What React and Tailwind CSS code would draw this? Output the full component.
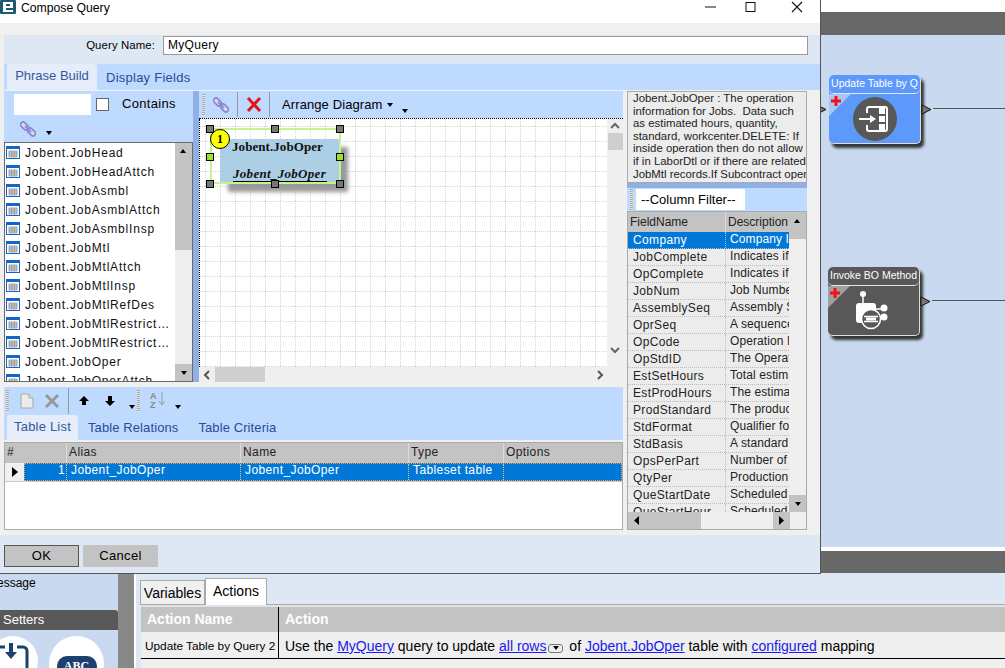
const ui = { fontFamily: '"Liberation Sans", Arial, sans-serif' };

const tables = [
  "Jobent.JobHead",
  "Jobent.JobHeadAttch",
  "Jobent.JobAsmbl",
  "Jobent.JobAsmblAttch",
  "Jobent.JobAsmblInsp",
  "Jobent.JobMtl",
  "Jobent.JobMtlAttch",
  "Jobent.JobMtlInsp",
  "Jobent.JobMtlRefDes",
  "Jobent.JobMtlRestrict…",
  "Jobent.JobMtlRestrict…",
  "Jobent.JobOper",
  "Jobent.JobOperAttch",
];

const fields = [
  ["Company", "Company Ident"],
  ["JobComplete", "Indicates if the"],
  ["OpComplete", "Indicates if the"],
  ["JobNum", "Job Number"],
  ["AssemblySeq", "Assembly Seq"],
  ["OprSeq", "A sequence"],
  ["OpCode", "Operation Master"],
  ["OpStdID", "The Operation"],
  ["EstSetHours", "Total estimated"],
  ["EstProdHours", "The estimated"],
  ["ProdStandard", "The production"],
  ["StdFormat", "Qualifier for"],
  ["StdBasis", "A standard basis"],
  ["OpsPerPart", "Number of ops"],
  ["QtyPer", "Production Qty"],
  ["QueStartDate", "Scheduled date"],
  ["QueStartHour", "Scheduled date"],
];

const description = [
  "Jobent.JobOper : The operation",
  "information for Jobs.  Data such",
  "as estimated hours, quantity,",
  "standard, workcenter.DELETE: If",
  "inside operation then do not allow",
  "if in LaborDtl or if there are related",
  "JobMtl records.If Subcontract oper",
];

function TableIcon() {
  return (
    <svg width="14" height="13" viewBox="0 0 14 13" className="shrink-0">
      <rect x="0.5" y="0.5" width="13" height="12" fill="#fff" stroke="#1166c8" />
      <rect x="1" y="1" width="12" height="2" fill="#1166c8" />
      <path d="M3 5h8v6H3zM3 7h8M3 9h8M5.7 5v6M8.3 5v6" fill="#e4e4e4" stroke="#8a8a8a" strokeWidth="0.8" />
    </svg>
  );
}

function ChainIcon() {
  return (
    <svg width="16" height="16" viewBox="0 0 16 16">
      <g fill="#d3def4" stroke="#8f84ca" strokeWidth="1.6">
        <rect x="0" y="2.5" width="9" height="5" rx="2.5" transform="rotate(45 4.5 5)" />
        <rect x="7" y="8.5" width="9" height="5" rx="2.5" transform="rotate(45 11.5 11)" />
      </g>
      <path d="M5 5l6 6" stroke="#7f90d4" strokeWidth="2" />
    </svg>
  );
}

function Caret() {
  return <span className="w-0 h-0 border-x-[3.5px] border-x-transparent border-t-[4px] border-t-black" />;
}

function Grip() {
  return <div className="w-[3px] h-[22px] shrink-0 bg-[repeating-linear-gradient(#a8a8a8_0_1px,#e4e4e4_1px_2px)]" />;
}

function Handle({ className }) {
  return <div className={`absolute w-[8px] h-[8px] border border-black ${className}`} />;
}

function GridDots() {
  return (
    <svg className="absolute inset-0 w-full h-full">
      <defs>
        <pattern id="dots" x="5" y="7" width="15" height="15" patternUnits="userSpaceOnUse">
          <path d="M0 0.5H15M0.5 0V15" stroke="#d4d4d4" strokeDasharray="1 1" fill="none" />
        </pattern>
      </defs>
      <rect width="100%" height="100%" fill="url(#dots)" />
    </svg>
  );
}

function QueryNodeIcon() {
  return (
    <svg width="44" height="44" viewBox="0 0 44 44">
      <circle cx="22" cy="22" r="22" fill="#585858" />
      <path d="M14 16v-4a2 2 0 0 1 2-2h16a2 2 0 0 1 2 2v20a2 2 0 0 1-2 2H16a2 2 0 0 1-2-2v-4" fill="none" stroke="#fff" strokeWidth="2" />
      <path d="M26 11h6v6h-6zM26 19h6v6h-6zM26 27h6v6h-6z" fill="#fff" />
      <path d="M6 21h11v-3l6 4-6 4v-3H6z" fill="#fff" />
    </svg>
  );
}

function MethodNodeIcon() {
  return (
    <svg width="36" height="42" viewBox="0 0 36 42">
      <circle cx="7" cy="4" r="3" fill="#fff" />
      <path d="M7 6v8" stroke="#fff" strokeWidth="1.5" />
      <rect x="0" y="13" width="20" height="20" rx="3" fill="#fff" />
      <path d="M20 19h7M20 27h7" stroke="#fff" strokeWidth="1.5" />
      <circle cx="28" cy="18" r="3.5" fill="#fff" />
      <circle cx="28" cy="27" r="3.5" fill="#fff" />
      <circle cx="15" cy="29" r="9.5" fill="#585858" stroke="#fff" strokeWidth="1.5" />
      <path d="M8 26.5h14M8 31.5h14" stroke="#fff" strokeWidth="1.5" />
      <rect x="10" y="27.5" width="10" height="3" fill="#fff" />
    </svg>
  );
}

function Plus() {
  return (
    <svg width="10" height="10" viewBox="0 0 10 10" className="absolute left-[2px] top-[2px]">
      <path d="M3.5 0h3v3.5H10v3H6.5V10h-3V6.5H0v-3h3.5z" fill="#f01020" />
    </svg>
  );
}

function Port({ className }) {
  return (
    <svg width="11" height="11" viewBox="0 0 11 11" className={`absolute ${className}`}>
      <path d="M1 1l9 4.5L1 10z" fill="#777" stroke="#111" />
    </svg>
  );
}

function FlowNode({ title, left, top, bg, corner, icon }) {
  return (
    <div
      className={`absolute w-[92px] h-[69px] rounded-[5px] flex flex-col shadow-[3px_4px_3px_#333] border-r border-b border-[#ddd] ${left} ${top} ${bg}`}
    >
      <div className="h-[19px] shrink-0 rounded-[5px] border-b border-[#dfe8f5] flex items-center justify-center text-white text-[10.5px] whitespace-nowrap">
        {title}
      </div>
      <div className="relative flex-1 flex items-center justify-center">
        <svg width="22" height="22" viewBox="0 0 22 22" className="absolute left-0 top-0">
          <path d="M0 0h22L0 22z" fill={corner} />
        </svg>
        <Plus />
        {icon}
      </div>
    </div>
  );
}

export default function App() {
  return (
    <div className="relative w-[1005px] h-[668px] overflow-hidden bg-[#dee8f5] flex flex-col text-black" style={ui}>
      {/* Window behind */}
      <div className="h-[12px] bg-white shrink-0" />
      <div className="h-[23px] bg-[#686868] shrink-0" />
      <div className="relative h-[512px] bg-[#c9d9ef] shrink-0">
        <FlowNode
          title="Update Table by Q"
          left="left-[829px]"
          top="top-[40px]"
          bg="bg-[#5c99fb]"
          corner="#a9c6f0"
          icon={<QueryNodeIcon />}
        />
        <FlowNode
          title="Invoke BO Method"
          left="left-[828px]"
          top="top-[232px]"
          bg="bg-[#585858]"
          corner="#a0a0a0"
          icon={<MethodNodeIcon />}
        />
        <Port className="left-[816px] top-[69px]" />
        <Port className="left-[921px] top-[69px]" />
        <Port className="left-[920px] top-[261px]" />
        <div className="absolute left-[933px] right-0 top-[73px] h-[1px] bg-[#555]" />
        <div className="absolute left-[932px] right-0 top-[265px] h-[1px] bg-[#555]" />
      </div>
      <div className="h-[4px] bg-white shrink-0" />
      <div className="h-[22px] bg-[#686868] shrink-0" />
      <div className="flex flex-1 min-h-0">
        <div className="w-[118px] shrink-0 bg-[#c9d9ef] flex flex-col overflow-hidden">
          <div className="h-[37px] shrink-0 text-[12px] leading-[14px] whitespace-nowrap">
            <div className="h-[3px] overflow-hidden">
              <div className="-ml-[4px] -mt-[11px]">Show</div>
            </div>
            <div className="-ml-[3px]">essage</div>
          </div>
          <div className="h-[20px] bg-[#585858] rounded-tr-[3px] text-white text-[13px] pl-[3px] leading-[20px] shrink-0">
            Setters
          </div>
          <div className="flex gap-[11px] -ml-[12px] mt-[6px] shrink-0">
            <div className="w-[50px] h-[50px] rounded-full bg-white shrink-0 flex items-start justify-center pt-[7px]">
              <svg width="34" height="32" viewBox="0 0 34 32">
                <path d="M3 4h6M21 4h6a4 4 0 0 1 4 4v24" fill="none" stroke="#1c4170" strokeWidth="3" />
                <path d="M13 0h4v9h4l-6 7-6-7h4z" fill="#1c4170" />
              </svg>
            </div>
            <div className="w-[55px] h-[55px] rounded-full bg-white shrink-0 flex items-start justify-center pt-[20px]">
              <div className="w-[40px] h-[20px] rounded-full bg-[#1c4170] text-white text-[12px] font-bold text-center leading-[20px]" style={{ fontFamily: '"Liberation Serif", serif' }}>
                ABC
              </div>
            </div>
          </div>
        </div>
        <div className="w-[16px] shrink-0 bg-[#888]" />
        <div className="w-[2px] shrink-0 bg-white" />
        <div className="flex-1 min-w-0 flex flex-col pl-[4px]">
          <div className="flex items-end h-[32px] shrink-0 border-b border-[#aaa]">
            <div className="h-[24px] w-[65px] bg-[#f0f0f0] border border-[#aaa] border-b-0 text-[14px] text-center leading-[24px]">
              Variables
            </div>
            <div className="h-[27px] w-[62px] bg-white border border-[#aaa] border-b-0 text-[14px] text-center leading-[24px] -mb-px">
              Actions
            </div>
          </div>
          <div className="flex-1 bg-[#efefef] ml-[1px]">
            <div className="flex h-[27px] bg-[#c3c3c3] text-white text-[14px] font-bold leading-[25px] border-t-2 border-[#dfe3e8]">
              <div className="w-[138px] pl-[6px] border-r border-black">Action Name</div>
              <div className="pl-[6px]">Action</div>
            </div>
            <div className="flex h-[27px] border-b border-black items-center">
              <div className="w-[138px] h-full pl-[4px] border-r border-black text-[11.8px] leading-[29px] whitespace-nowrap">
                Update Table by Query 2
              </div>
              <div className="pl-[6px] pt-[3px] text-[14px] whitespace-nowrap flex items-center">
                <span className="whitespace-pre">Use the </span>
                <a className="text-[#1a1aee] underline">MyQuery</a>
                <span className="whitespace-pre"> query to update </span>
                <a className="text-[#1a1aee] underline">all rows</a>
                <span className="mx-[2px] w-[15px] h-[9px] mt-[3px] rounded-[3px] border border-[#777] bg-[#eee] flex items-center justify-center">
                  <Caret />
                </span>
                <span className="whitespace-pre"> of </span>
                <a className="text-[#1a1aee] underline">Jobent.JobOper</a>
                <span className="whitespace-pre"> table with </span>
                <a className="text-[#1a1aee] underline">configured</a>
                <span className="whitespace-pre"> mapping</span>
              </div>
            </div>
          </div>
        </div>
      </div>

      {/* Compose Query dialog */}
      <div className="absolute left-0 top-0 w-[821px] h-[574px] bg-[#f0f0f0] border-r border-b border-[#555] flex flex-col">
        <div className="h-[23px] shrink-0 bg-white flex items-center relative">
          <svg width="16" height="14" viewBox="0 0 16 14" className="shrink-0 -mt-[9px]">
            <rect width="16" height="14" rx="1" fill="#1c5a70" />
            <path d="M3 2h10v6H6v2h7v2H3z" fill="#fff" />
            <path d="M6 4h4v2H6z" fill="#1c5a70" />
          </svg>
          <span className="ml-[5px] -mt-[7px] text-[12.2px]">Compose Query</span>
          <div className="ml-auto flex items-center -mt-[9px]">
            <svg width="120" height="12" viewBox="0 0 120 12" className="-mr-[5px]">
              <path d="M0 6h11" stroke="#111" />
              <rect x="41" y="1.5" width="9" height="9" fill="none" stroke="#111" />
              <path d="M87 1l10 10M97 1L87 11" stroke="#111" strokeWidth="1.1" />
            </svg>
          </div>
        </div>
        <div className="h-[12px] shrink-0" />

        <div className="h-[29px] shrink-0 ml-[4px] bg-[#dee8f5] flex items-start pt-[1px] pr-[12px]">
          <span className="w-[151px] text-right text-[11.4px] tracking-[0.1px] leading-[18px]">Query Name:</span>
          <div className="ml-[8px] flex-1 h-[19px] bg-white border border-[#999] pl-[4px] text-[12px] tracking-[0.3px] leading-[17px]">
            MyQuery
          </div>
        </div>

        <div className="h-[26px] shrink-0 ml-[4px] bg-[#bedaff] flex items-end pl-[3px]">
          <div className="h-[26px] w-[90px] bg-[#e4edf9] rounded-t-[3px] text-center text-[13px] text-[#34589c] leading-[24px]">
            Phrase Build
          </div>
          <div className="h-[24px] pl-[9px] text-[13px] tracking-[0.25px] text-[#2a4a9a] leading-[24px]">Display Fields</div>
        </div>

        <div className="flex flex-1 min-h-0 ml-[4px] pt-[1px]">
          <div className="w-[619px] shrink-0 flex flex-col">
            <div className="h-[291px] flex shrink-0">
              {/* Table picker */}
              <div className="w-[189px] shrink-0 flex flex-col bg-[#bedaff]">
                <div className="h-[24px] flex items-center pl-[10px] pt-[2px] shrink-0">
                  <div className="w-[77px] h-[21px] bg-white" />
                  <div className="ml-[5px] w-[13px] h-[13px] bg-white border border-[#666]" />
                  <span className="ml-[13px] text-[13px] tracking-[0.3px]">Contains</span>
                </div>
                <div className="h-[27px] flex items-start pl-[16px] pt-[6px] shrink-0">
                  <ChainIcon />
                  <span className="ml-[10px] mt-[10px] flex">
                    <Caret />
                  </span>
                </div>
                <div className="flex-1 min-h-0 flex bg-white border-[1.5px] border-[#6a6a6a]">
                  <div className="flex-1 min-w-0 overflow-hidden">
                    {tables.map((t, i) => (
                      <div key={i} className="h-[19px] flex items-center pl-[1px] whitespace-nowrap">
                        <TableIcon />
                        <span className="ml-[5px] text-[12px] tracking-[0.8px] text-[#111]">{t}</span>
                      </div>
                    ))}
                  </div>
                  <div className="w-[17px] shrink-0 bg-[#efefef] flex flex-col">
                    <div className="h-[17px] bg-[#c3c3c3] flex items-center justify-center rotate-180">
                      <Caret />
                    </div>
                    <div className="h-[90px] bg-[#c3c3c3]" />
                    <div className="flex-1" />
                    <div className="h-[17px] bg-[#c3c3c3] flex items-center justify-center">
                      <Caret />
                    </div>
                  </div>
                </div>
              </div>
              <div className="w-[6px] shrink-0 bg-[#8fb0e4]" />
              {/* Diagram */}
              <div className="flex-1 min-w-0 flex flex-col">
                <div className="h-[27px] shrink-0 bg-[#bedaff] flex items-center">
                  <div className="ml-[3px]">
                    <Grip />
                  </div>
                  <div className="w-[32px] flex justify-center">
                    <ChainIcon />
                  </div>
                  <div className="w-px h-[25px] bg-[#999]" />
                  <div className="w-[31px] flex justify-center">
                    <svg width="16" height="15" viewBox="0 0 16 15">
                      <path d="M2 1l12 13M14 1L2 14" stroke="#e01818" strokeWidth="3" />
                    </svg>
                  </div>
                  <div className="w-px h-[25px] bg-[#999]" />
                  <span className="ml-[12px] text-[13px] tracking-[0.1px]">Arrange Diagram</span>
                  <span className="ml-[4px] flex">
                    <Caret />
                  </span>
                  <span className="ml-[9px] mt-[13px] flex">
                    <Caret />
                  </span>
                </div>
                <div className="flex-1 min-h-0 flex border-t border-dotted border-black">
                  <div className="relative flex-1 bg-white border-l border-dotted border-black overflow-hidden">
                    <GridDots />
                    {/* Table node on the diagram */}
                    <div className="absolute left-[20px] top-[20px] w-[120px] h-[45px] bg-[#adcfe5] shadow-[8px_8px_4px_#999]">
                      <div className="pl-[12px] text-[13px] font-bold leading-[15px] text-[#111] tracking-[0.07px]" style={{ fontFamily: '"Liberation Serif", serif' }}>
                        Jobent.JobOper
                      </div>
                      <div className="ml-[13px] mt-[13px] w-[94px] border-b border-black text-[13px] italic font-bold leading-[14px] text-[#111] tracking-[0.3px] whitespace-nowrap" style={{ fontFamily: '"Liberation Serif", serif' }}>
                        Jobent_JobOper
                      </div>
                    </div>
                    <div className="absolute left-[10px] top-[9px] w-[131px] h-[56px] border-2 border-[#c4f58c]" />
                    <div className="absolute left-[10px] top-[10px] w-[20px] h-[20px] rounded-full bg-[#ffff00] border border-black text-center text-[12px] font-bold leading-[18px]" style={{ fontFamily: '"Liberation Serif", serif' }}>
                      1
                    </div>
                    <Handle className="left-[6px] top-[6px] bg-[#777]" />
                    <Handle className="left-[71px] top-[6px] bg-[#777]" />
                    <Handle className="left-[136px] top-[6px] bg-[#777]" />
                    <Handle className="left-[6px] top-[34px] bg-[#9be22d]" />
                    <Handle className="left-[136px] top-[34px] bg-[#9be22d]" />
                    <Handle className="left-[6px] top-[61px] bg-[#777]" />
                    <Handle className="left-[71px] top-[61px] bg-[#777]" />
                    <Handle className="left-[136px] top-[61px] bg-[#777]" />
                  </div>
                  <div className="w-[16px] shrink-0 bg-[#efefef] flex flex-col items-center pt-[2px]">
                    <svg width="12" height="10" viewBox="0 0 12 10">
                      <path d="M2 7l4-4 4 4" fill="none" stroke="#666" strokeWidth="2" />
                    </svg>
                    <div className="w-[15px] h-[17px] bg-[#cfcfcf] mt-[2px]" />
                    <div className="flex-1" />
                    <svg width="12" height="10" viewBox="0 0 12 10" className="mb-[12px]">
                      <path d="M2 3l4 4 4-4" fill="none" stroke="#666" strokeWidth="2" />
                    </svg>
                  </div>
                </div>
                <div className="h-[15px] shrink-0 bg-[#efefef] flex items-center">
                  <svg width="10" height="12" viewBox="0 0 10 12" className="ml-[3px]">
                    <path d="M7 2L3 6l4 4" fill="none" stroke="#555" strokeWidth="2" />
                  </svg>
                  <div className="ml-[3px] w-[50px] h-[15px] bg-[#cfcfcf]" />
                  <div className="flex-1" />
                  <svg width="10" height="12" viewBox="0 0 10 12" className="mr-[18px]">
                    <path d="M3 2l4 4-4 4" fill="none" stroke="#555" strokeWidth="2" />
                  </svg>
                </div>
              </div>
            </div>

            <div className="h-[5px] shrink-0" />

            {/* Bottom panel */}
            <div className="flex-1 min-h-0 flex flex-col">
              <div className="h-[53px] shrink-0 bg-[#bedaff] flex flex-col">
                <div className="h-[27px] flex items-center pl-[2px] shrink-0">
                  <Grip />
                  <div className="w-[37px] flex justify-center -ml-[1px]">
                    <svg width="14" height="16" viewBox="0 0 14 16">
                      <path d="M1 1h8l4 4v10H1z" fill="#ececec" stroke="#a8a8a8" />
                      <path d="M9 1v4h4" fill="#ddd" stroke="#a8a8a8" />
                    </svg>
                  </div>
                  <svg width="16" height="16" viewBox="0 0 16 16" className="-ml-[1px]">
                    <path d="M2 2l12 12M14 2L2 14" stroke="#999" strokeWidth="3" />
                  </svg>
                  <div className="ml-[8px] w-px h-[26px] bg-[#999]" />
                  <svg width="10" height="10" viewBox="0 0 10 10" className="ml-[10px]">
                    <path d="M5 0l5 5H7v4H3V5H0z" fill="#000" />
                  </svg>
                  <svg width="10" height="10" viewBox="0 0 10 10" className="ml-[16px]">
                    <path d="M3 0h4v5h3l-5 5-5-5h3z" fill="#000" />
                  </svg>
                  <span className="ml-[14px] mt-[13px] flex">
                    <Caret />
                  </span>
                  <div className="ml-[2px]">
                    <Grip />
                  </div>
                  <div className="ml-[10px] w-[17px] relative h-[18px] text-[9px] font-bold leading-[9px] text-[#888]">
                    A
                    <br />Z
                    <svg width="6" height="14" viewBox="0 0 6 14" className="absolute left-[9px] top-0">
                      <path d="M3 0v12M0 9l3 4 3-4" fill="none" stroke="#999" />
                    </svg>
                  </div>
                  <span className="ml-[8px] mt-[13px] flex">
                    <Caret />
                  </span>
                </div>
                <div className="h-[26px] flex items-end pl-[3px]">
                  <div className="h-[25px] w-[71px] bg-[#e4edf9] rounded-t-[3px] text-center text-[13px] tracking-[0.2px] text-[#34589c] leading-[23px]">
                    Table List
                  </div>
                  <div className="h-[24px] pl-[10px] text-[13px] tracking-[0.1px] text-[#2a4a9a] leading-[24px]">Table Relations</div>
                  <div className="h-[24px] pl-[20px] text-[13px] tracking-[0.1px] text-[#2a4a9a] leading-[24px]">Table Criteria</div>
                </div>
              </div>
              <div className="h-[2px] shrink-0" />
              <div className="flex-1 min-h-0 bg-white border border-[#aaa] flex flex-col text-[12px] tracking-[0.4px]">
                <div className="h-[20px] shrink-0 bg-[#c3c3c3] flex leading-[19px] text-[#222]">
                  <div className="w-[62px] pl-[2px] border-r border-[#ddd]">#</div>
                  <div className="w-[174px] pl-[2px] border-r border-[#ddd]">Alias</div>
                  <div className="w-[168px] pl-[2px] border-r border-[#ddd]">Name</div>
                  <div className="w-[95px] pl-[2px] border-r border-[#ddd]">Type</div>
                  <div className="pl-[2px]">Options</div>
                </div>
                <div className="h-[19px] shrink-0 flex leading-[12px] border-b border-[#ccc]">
                  <div className="w-[19px] shrink-0 bg-[#f0f0f0] flex items-center justify-center">
                    <svg width="6" height="10" viewBox="0 0 6 10">
                      <path d="M0 0l6 5-6 5z" fill="#000" />
                    </svg>
                  </div>
                  <div className="flex-1 flex bg-[#0078d7] text-white border border-dotted border-[#f0a040]">
                    <div className="w-[42px] pr-[1px] text-right border-r border-dotted border-[#f0c080]">1</div>
                    <div className="w-[174px] pl-[4px] border-r border-dotted border-[#f0c080]">Jobent_JobOper</div>
                    <div className="w-[168px] pl-[4px] border-r border-dotted border-[#f0c080]">Jobent_JobOper</div>
                    <div className="w-[95px] pl-[4px] border-r border-dotted border-[#f0c080]">Tableset table</div>
                  </div>
                </div>
              </div>
            </div>
          </div>

          {/* Right column */}
          <div className="ml-[4px] w-[180px] shrink-0 flex flex-col">
            <div className="h-[92px] shrink-0 bg-[#ececec] border border-[#aaa] pl-[5px] overflow-hidden text-[11.4px] leading-[12.6px] text-[#222] whitespace-pre">
              {description.map((line) => (
                <div key={line}>{line}</div>
              ))}
            </div>
            <div className="h-[5px] shrink-0 bg-[#8fb0e4]" />
            <div className="h-[23px] shrink-0 bg-[#bedaff] flex items-center pl-[3px]">
              <Grip />
              <div className="ml-[3px] w-[109px] h-[21px] bg-white text-[13px] pl-[5px] leading-[21px]">--Column Filter--</div>
            </div>
            <div className="flex-1 min-h-0 border border-[#aaa] bg-[#efefef] flex flex-col text-[12px] tracking-[0.35px]">
              <div className="flex-1 min-h-0 flex">
                <div className="flex-1 min-w-0 flex flex-col overflow-hidden">
                  <div className="h-[20px] shrink-0 bg-[#c3c3c3] flex leading-[20px] text-[#222] tracking-normal">
                    <div className="w-[98px] pl-[2px] border-r border-[#ddd] shrink-0">FieldName</div>
                    <div className="pl-[2px] whitespace-nowrap">Description</div>
                  </div>
                  {fields.map(([name, desc], i) => (
                    <div
                      key={name}
                      className={`h-[17px] shrink-0 flex leading-[16px] border-b border-dotted border-[#bbb] whitespace-nowrap ${i === 0 ? "bg-[#0078d7] text-white" : "bg-[#ececec] text-[#222]"}`}
                    >
                      <div className="w-[98px] pl-[5px] border-r border-dotted border-[#bbb] shrink-0">{name}</div>
                      <div className="pl-[4px] -mt-[1px] tracking-[0.1px]">{desc}</div>
                    </div>
                  ))}
                </div>
                <div className="w-[17px] shrink-0 flex flex-col">
                  <div className="h-[27px] bg-[#c3c3c3] flex justify-center rotate-180 items-end pb-[7px]">
                    <Caret />
                  </div>
                  <div className="flex-1" />
                  <div className="h-[17px] bg-[#c3c3c3] flex items-center justify-center">
                    <Caret />
                  </div>
                </div>
              </div>
              <div className="h-[17px] shrink-0 flex">
                <div className="w-[73px] bg-[#c3c3c3] flex items-center pl-[6px]">
                  <svg width="5" height="9" viewBox="0 0 5 9">
                    <path d="M5 0L0 4.5 5 9z" fill="#000" />
                  </svg>
                </div>
                <div className="w-[72px]" />
                <div className="w-[17px] bg-[#c3c3c3] flex items-center justify-center">
                  <svg width="5" height="9" viewBox="0 0 5 9">
                    <path d="M0 0l5 4.5L0 9z" fill="#000" />
                  </svg>
                </div>
              </div>
            </div>
          </div>
        </div>

        <div className="h-[38px] shrink-0 mt-[5px] bg-[#dee8f5] flex items-start gap-[4px] pl-[4px] pt-[10px]">
          <div className="w-[75px] h-[22px] bg-[#c3c3c3] border border-[#555] text-center text-[13px] tracking-[0.3px] leading-[20px]">OK</div>
          <div className="w-[75px] h-[22px] bg-[#c3c3c3] text-center text-[13px] tracking-[0.3px] leading-[22px]">Cancel</div>
        </div>
      </div>
    </div>
  );
}
